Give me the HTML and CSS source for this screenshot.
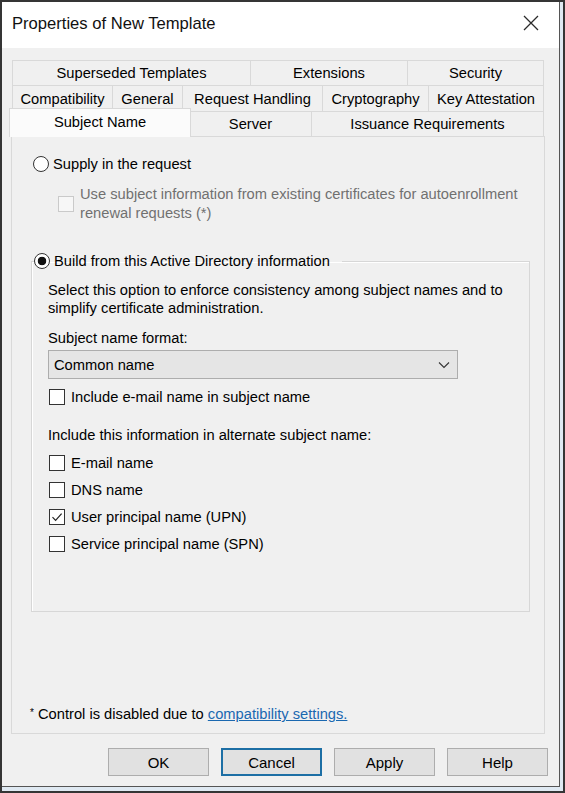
FILE: index.html
```html
<!DOCTYPE html>
<html>
<head>
    <meta charset="utf-8" />
    <title>Properties of New Template</title>
    <link rel="stylesheet" href="styles.css">
</head>
<body>
    <div class="screen">
        <div class="window">
            <div class="titlebar">
                <span class="title">Properties of New Template</span>
                <svg class="close" width="16" height="16" viewBox="0 0 16 16">
                    <path d="M1 1 L15 15 M15 1 L1 15" stroke="#2b2b2b" stroke-width="1.3" fill="none" />
                </svg>
            </div>

            <div class="dialog">
                <div class="tabs">
                    <div class="tab-row row1">
                        <div class="tab">Superseded Templates</div>
                        <div class="tab">Extensions</div>
                        <div class="tab">Security</div>
                    </div>
                    <div class="tab-row row2">
                        <div class="tab">Compatibility</div>
                        <div class="tab">General</div>
                        <div class="tab">Request Handling</div>
                        <div class="tab">Cryptography</div>
                        <div class="tab">Key Attestation</div>
                    </div>
                    <div class="tab-row row3">
                        <div class="tab selected">Subject Name</div>
                        <div class="tab">Server</div>
                        <div class="tab">Issuance Requirements</div>
                    </div>
                </div>

                <div class="page">
                    <div class="option">
                        <span class="radio"></span>
                        <span>Supply in the request</span>
                    </div>
                    <div class="option sub disabled">
                        <span class="check"></span>
                        <span>Use subject information from existing certificates for autoenrollment<br>renewal requests (*)</span>
                    </div>

                    <fieldset class="group">
                        <legend class="option">
                            <span class="radio on"></span>
                            <span>Build from this Active Directory information</span>
                        </legend>
                        <p class="hint">Select this option to enforce consistency among subject names and to simplify certificate administration.</p>
                        <p class="label">Subject name format:</p>
                        <div class="select">
                            <span>Common name</span>
                            <svg width="12" height="8" viewBox="0 0 12 8">
                                <path d="M1 1.5 L6 6.5 L11 1.5" stroke="#333" stroke-width="1.1" fill="none" />
                            </svg>
                        </div>
                        <div class="option box-row">
                            <span class="check"></span>
                            <span>Include e-mail name in subject name</span>
                        </div>
                        <p class="label alt">Include this information in alternate subject name:</p>
                        <div class="option box-row first">
                            <span class="check"></span>
                            <span>E-mail name</span>
                        </div>
                        <div class="option box-row">
                            <span class="check"></span>
                            <span>DNS name</span>
                        </div>
                        <div class="option box-row">
                            <span class="check">
                                <svg width="14" height="14" viewBox="0 0 14 14">
                                    <path d="M2.5 7.2 L5.6 10.3 L11.6 3.6" stroke="#222" stroke-width="1.2" fill="none" />
                                </svg>
                            </span>
                            <span>User principal name (UPN)</span>
                        </div>
                        <div class="option box-row">
                            <span class="check"></span>
                            <span>Service principal name (SPN)</span>
                        </div>
                    </fieldset>

                    <p class="footnote"><sup>*</sup> Control is disabled due to <a href="#">compatibility settings.</a></p>
                </div>

                <div class="buttons">
                    <button>OK</button>
                    <button class="focused">Cancel</button>
                    <button>Apply</button>
                    <button>Help</button>
                </div>
            </div>
        </div>
    </div>
</body>
</html>
```

FILE: styles.css
```css
body {
    margin: 0;
    background: #dfe9f2;
    font-family: "Liberation Sans", Arial, sans-serif;
    font-size: 14.7px;
    color: #000;
}

.screen {
    box-sizing: border-box;
    width: 565px;
    height: 793px;
    border: 2px solid #353535;
    background: #dfe9f2;
}

.window {
    box-sizing: border-box;
    width: 558px;
    height: 785px;
    border-right: 1px solid #555;
    border-bottom: 1px solid #555;
    background: #f0f0f0;
    display: flex;
    flex-direction: column;
}

.titlebar {
    height: 44px;
    background: #fff;
    display: flex;
    align-items: center;
    justify-content: space-between;
    padding: 0 20px 2px 10px;
}

.title {
    font-size: 16.6px;
    color: #111;
}

.close {
    margin-top: -2px;
}

.dialog {
    flex: 1;
    display: flex;
    flex-direction: column;
}

/* tab strip, three rows */
.tabs {
    margin: 12px 0 0 10px;
    width: 532px;
}

.tab-row {
    display: grid;
    height: 25px;
}

.row1 { grid-template-columns: 238px 157px 137px; }
.row2 { grid-template-columns: 100px 70px 140px 106px 116px; height: 26px; }
.row3 { grid-template-columns: 177px 122px 233px; }

.tab {
    box-sizing: border-box;
    border: 1px solid #d9d9d9;
    border-right: none;
    border-bottom: none;
    background: #f0f0f0;
    display: flex;
    align-items: center;
    justify-content: center;
    white-space: nowrap;
}

.tab:last-child {
    border-right: 1px solid #d9d9d9;
}

.tab.selected {
    background: #fbfbfb;
    margin: -3px -2px -1px -3px;
    border-right: 1px solid #d9d9d9;
    position: relative;
    z-index: 1;
    padding-bottom: 2px;
}

/* page of the selected tab */
.page {
    box-sizing: border-box;
    margin-left: 9px;
    width: 534px;
    height: 598px;
    border: 1px solid #d9d9d9;
    background: #f0f0f0;
    display: flex;
    flex-direction: column;
    padding: 18px 14px 0 19px;
}

.option {
    display: flex;
    align-items: center;
    gap: 4px;
    line-height: 18px;
    margin-left: 2px;
}

.radio {
    box-sizing: border-box;
    width: 16px;
    height: 16px;
    border: 1px solid #333;
    border-radius: 50%;
    background: #fff;
    flex: none;
}

.radio.on {
    background: radial-gradient(circle, #111 0 4px, #fff 4.6px);
}

.check {
    box-sizing: border-box;
    width: 16px;
    height: 16px;
    border: 1px solid #333;
    background: #fff;
    flex: none;
    display: flex;
    align-items: center;
    justify-content: center;
}

.sub {
    margin: 12px 0 0 27px;
    gap: 6px;
    line-height: 19px;
}

.disabled {
    color: #707070;
}

.disabled .check {
    border-color: #cacaca;
    background: #f7f7f7;
}

.group {
    margin: 29px 0 0 0;
    border: 1px solid #d7d7d7;
    box-shadow: inset 1px 1px 0 #fff;
    padding: 11px 16px 58px 16px;
    min-width: 0;
}

.group legend {
    margin-left: -14px;
    padding: 0 12px 0 0;
}

.hint {
    margin: 0;
    line-height: 18px;
}

.label {
    margin: 12px 0 0;
    line-height: 18px;
}

.select {
    box-sizing: border-box;
    margin-top: 3px;
    width: 410px;
    height: 29px;
    border: 1px solid #adadad;
    background: #e5e5e5;
    display: flex;
    align-items: center;
    justify-content: space-between;
    padding: 0 7px 0 5px;
}

.box-row {
    margin: 9px 0 0 1px;
    gap: 6px;
}

.label.alt {
    margin-top: 20px;
}

.box-row.first {
    margin-top: 10px;
}

.footnote {
    margin: auto 0 10px -1px;
    line-height: 18px;
}

.footnote sup {
    font-size: 10px;
    vertical-align: 3px;
}

.footnote a {
    color: #1a68b0;
}

/* dialog buttons */
.buttons {
    display: flex;
    justify-content: flex-end;
    gap: 12px;
    margin: 14px 11px 0 0;
}

.buttons button {
    box-sizing: border-box;
    width: 101px;
    height: 28px;
    border: 1px solid #adadad;
    background: #e1e1e1;
    font-family: "Liberation Sans", Arial, sans-serif;
    font-size: 15px;
    color: #000;
}

.buttons button.focused {
    border: 2px solid #1d6fa5;
}
```
